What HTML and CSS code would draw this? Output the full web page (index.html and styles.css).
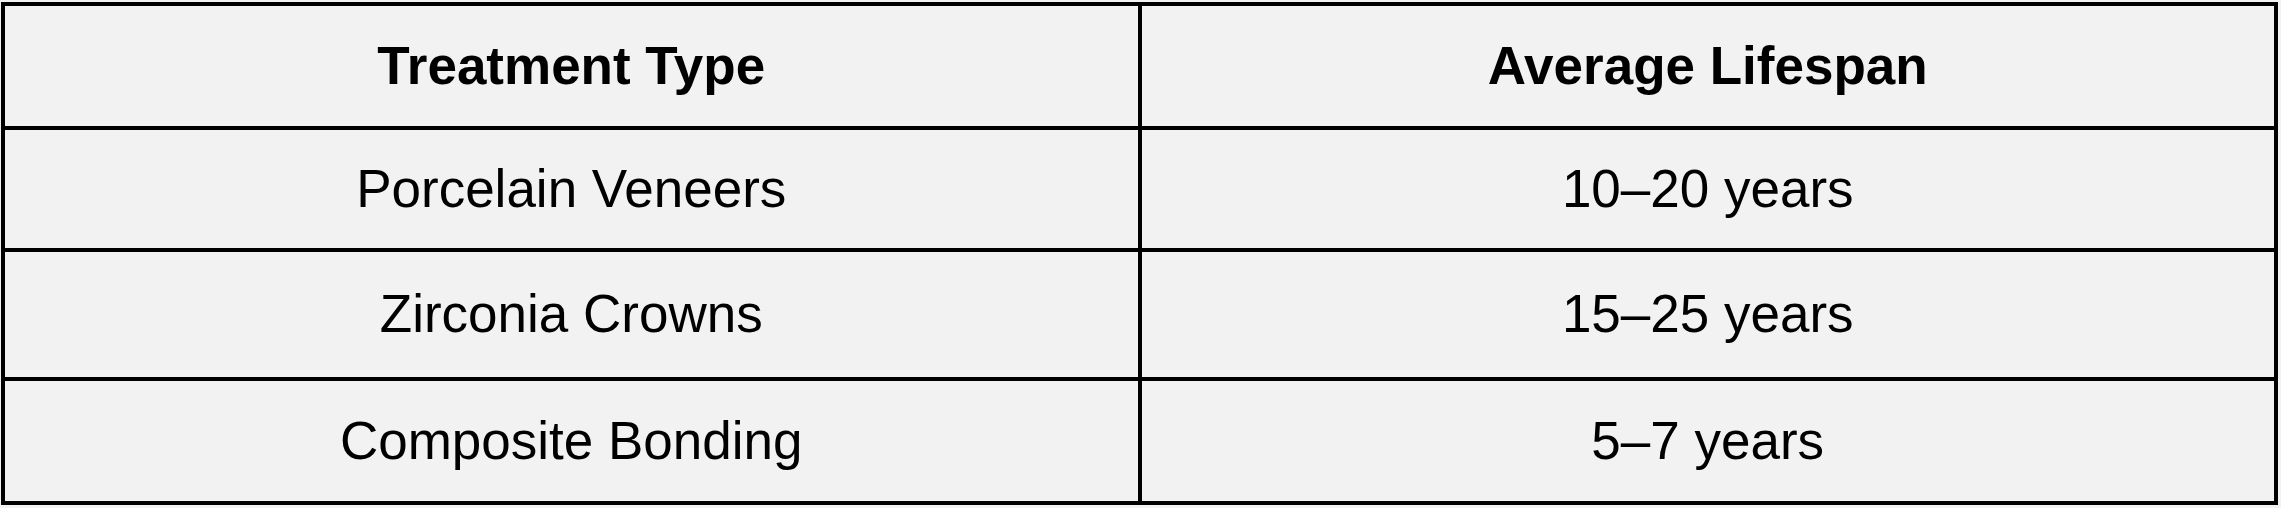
FILE: index.html
```html
<!DOCTYPE html>
<html lang="en">
<head>
<meta charset="utf-8">
<title>Treatment Lifespan</title>
<link rel="stylesheet" href="styles.css">
</head>
<body>
<table class="lifespan">
  <thead>
    <tr class="row-head">
      <th>Treatment Type</th>
      <th>Average Lifespan</th>
    </tr>
  </thead>
  <tbody>
    <tr class="row-a">
      <td>Porcelain Veneers</td>
      <td>10–20 years</td>
    </tr>
    <tr class="row-b">
      <td>Zirconia Crowns</td>
      <td>15–25 years</td>
    </tr>
    <tr class="row-c">
      <td>Composite Bonding</td>
      <td>5–7 years</td>
    </tr>
  </tbody>
</table>
</body>
</html>
```

FILE: styles.css
```css
html, body {
  margin: 0;
  padding: 0;
  background: #f2f2f2;
}

body {
  padding: 2px 3px 0 1px;
  font-family: "Liberation Sans", Arial, sans-serif;
  color: #000;
}

.lifespan {
  width: 2277px;
  border-collapse: collapse;
  table-layout: fixed;
  background: #f2f2f2;
}

.lifespan th,
.lifespan td {
  border: 4px solid #000;
  padding: 0;
  text-align: center;
  vertical-align: middle;
  font-size: 53px;
  line-height: 1.15;
}

.lifespan th {
  font-weight: bold;
}

.lifespan td {
  font-weight: normal;
}

.row-head { height: 124px; }
.row-a { height: 122px; }
.row-b { height: 129px; }
.row-c { height: 124px; }
```
